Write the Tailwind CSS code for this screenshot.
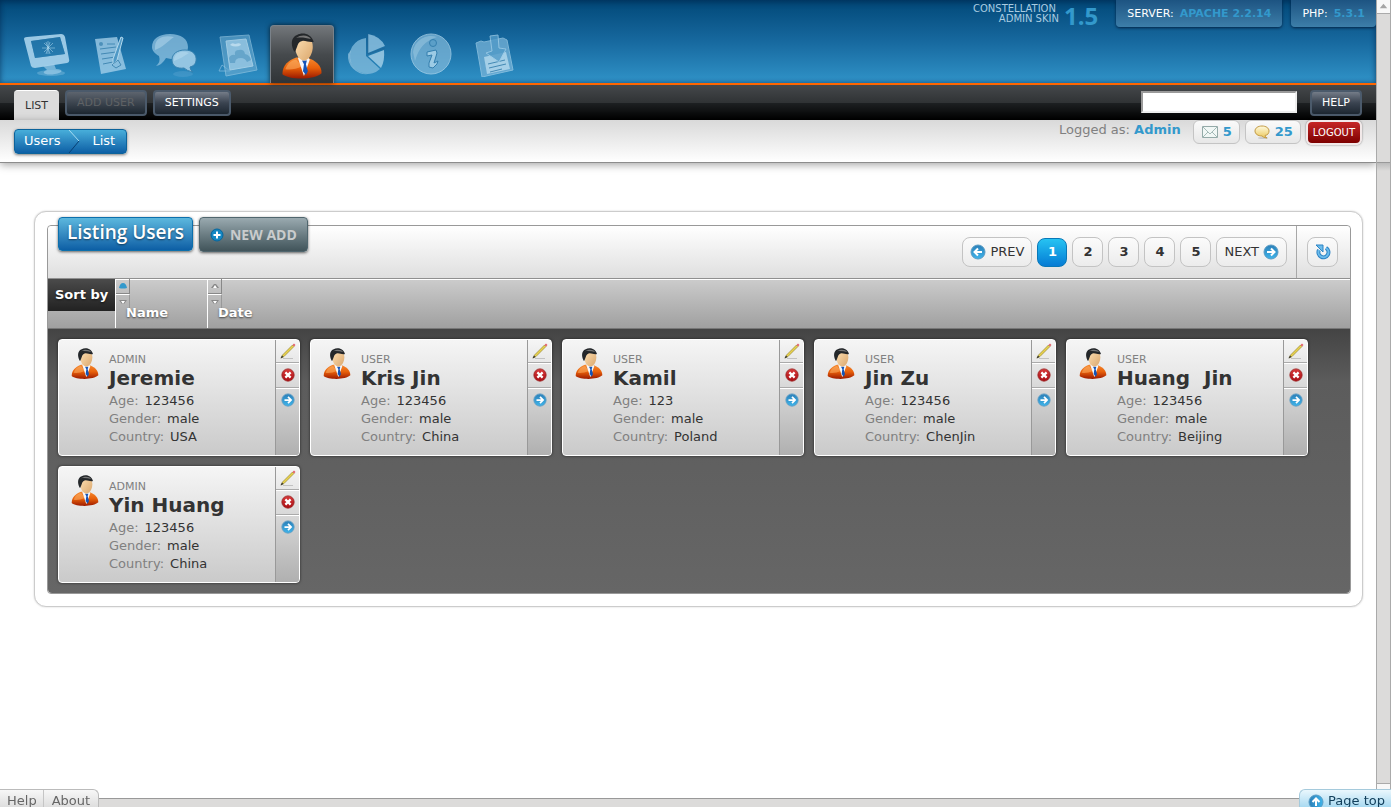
<!DOCTYPE html>
<html lang="en">
<head>
<meta charset="utf-8">
<title>Constellation Admin Skin</title>
<meta name="viewport" content="width=device-width, initial-scale=1">
<script src="https://cdn.jsdelivr.net/npm/@tailwindcss/browser@4"></script>
</head>
<body class="min-h-screen bg-white font-['DejaVu_Sans',sans-serif] text-[13px] leading-5 text-[#333333]">
<svg class="absolute size-0" aria-hidden="true">
  <defs>
    <linearGradient id="coat" x1="0" y1="0" x2="0" y2="1"><stop offset="0" stop-color="#f58a30"/><stop offset=".5" stop-color="#e8600a"/><stop offset="1" stop-color="#9c1a00"/></linearGradient>
    <linearGradient id="face" x1="0" y1="0" x2="1" y2="1"><stop offset="0" stop-color="#fde0b4"/><stop offset="1" stop-color="#dba76c"/></linearGradient>
    <linearGradient id="ball" x1="0" y1="0" x2="0" y2="1"><stop offset="0" stop-color="#2b7fb8"/><stop offset="1" stop-color="#3fb4ea"/></linearGradient>
    <linearGradient id="redball" x1="0" y1="0" x2="0" y2="1"><stop offset="0" stop-color="#d93a3a"/><stop offset="1" stop-color="#a80d14"/></linearGradient>
    <linearGradient id="gold" x1="0" y1="0" x2="0" y2="1"><stop offset="0" stop-color="#fffbe0"/><stop offset="1" stop-color="#eac65a"/></linearGradient>
  </defs>
  <symbol id="user" viewBox="0 0 40 48">
    <path d="M0 42C0 33 6 28 14 25L25 25C34 28 40 33 40 41C33 48 7 48 0 42Z" fill="url(#coat)"/>
    <path d="M3 37C5 31 9 28 14 27L20 34C14 37 8 38 3 37Z" fill="#ffc07a" opacity=".45"/>
    <path d="M16 26L22 44L28 27L25 24L17 24Z" fill="#f4f8fc"/>
    <path d="M20 28L25 28L24 32L26 39L24 43L21 39L22 32Z" fill="#1454b8"/>
    <path d="M13 14C13 7 16 4 22 4C28 4 31 8 31 14C31 21 27 28 22 28C17 28 13 21 13 14Z" fill="url(#face)"/>
    <path d="M12 19C8 12 9 4 15 2C20-1 29 0 32 9C28 10 25 8 21 8C16 9 16 12 15 14L13 19Z" fill="#24272a"/>
    <path d="M14 5C19 1 27 2 29 6C24 5 19 4 14 5Z" fill="#777"/>
  </symbol>
  <symbol id="arrow" viewBox="0 0 16 16">
    <circle cx="8" cy="8" r="7" fill="url(#ball)" stroke="#5a9cc4"/>
    <path d="M4 8H11M8 4.500L11.500 8L8 11.500" fill="none" stroke="#fff" stroke-width="2"/>
  </symbol>
  <symbol id="cross" viewBox="0 0 16 16">
    <circle cx="8" cy="8" r="7" fill="url(#redball)" stroke="#9c2020"/>
    <path d="M5 5L11 11M11 5L5 11" stroke="#fff" stroke-width="2.600"/>
  </symbol>
  <symbol id="pencil" viewBox="0 0 16 16">
    <path d="M3 15.500H13" stroke="#888" opacity=".4"/>
    <path d="M1 15L2.500 12L12.500 2L14 3.500L4 13.500Z" fill="#e8d24c" stroke="#8a7a2a" stroke-width=".6"/>
    <path d="M12.500 2L14 .5L15.500 2L14 3.500Z" fill="#e2606a"/>
    <path d="M.5 15.500L2 12.500L3.500 14Z" fill="#333"/>
  </symbol>
</svg>

<div class="flex min-h-screen">
<div class="flex min-w-0 flex-1 flex-col">
  <header>
    <div class="flex h-[83px] justify-between bg-linear-to-b from-[#024878] via-[#17699f] to-[#3093c8] shadow-[inset_0_2px_6px_rgba(0,20,50,.4),inset_0_-1px_4px_rgba(0,40,80,.3)]">
      <nav class="flex items-end pl-[14px]" aria-label="Main">
        <a href="#" aria-label="Home" class="flex h-[58px] w-16 justify-center pt-1">
          <svg class="size-12" viewBox="0 0 48 48" fill="#a9d3ec" fill-opacity=".6"><ellipse cx="29" cy="44" rx="14" ry="3" opacity=".5"/><path d="M21 37L32 35L34 40C42 40 41 44 33 45C23 47 18 43 25 41Z"/><path fill-rule="evenodd" d="M2 10Q2 8 5 8L39 5Q42 5 43 8L47 30Q48 33 45 34L13 39Q10 39 9 37ZM9 12L13 29L43 25L38 8Z" fill-opacity=".9"/><path d="M9 12L38 8L43 25L13 29Z" fill="#2e80b2" fill-opacity=".5"/><path d="M26 12V25M20 19H33M22 14L31 23M31 14L22 23M24 13L28 25M28 13L24 25" stroke="#bfe3f6" stroke-opacity=".6" stroke-width=".8"/></svg>
        </a>
        <a href="#" aria-label="Write" class="flex h-[58px] w-16 justify-center pt-1">
          <svg class="size-12" viewBox="0 0 48 48"><path d="M9 10L31 8L40 40L15 45Z" fill="#a9d3ec" opacity=".75"/><path d="M21 15H29M14 20L30 18M15 25L30 23M16 30L29 28M17 35L27 33" stroke="#4389b4"/><circle cx="15" cy="15" r="2" fill="#4d90ba"/><path d="M35 8L37 9L31 31L27 36L27 30Z" fill="#4f99c6" stroke="#b4d9ed"/><path d="M26 36L32 31L35 36L30 39Z" fill="none" stroke="#4389b4"/></svg>
        </a>
        <a href="#" aria-label="Comments" class="flex h-[58px] w-16 justify-center pt-1">
          <svg class="size-12" viewBox="0 0 48 48"><ellipse cx="33" cy="45" rx="10" ry="3" fill="#77b4da" opacity=".25"/><path d="M20 5C31 5 38 10 38 18C38 26 30 31 21 30L16 29Q12 36 6 37Q11 33 9 27C4 24 2 21 2 18C2 10 9 5 20 5Z" fill="#8fc2e0" opacity=".75"/><path d="M5 17C6 8 15 6 24 8C17 13 13 18 5 21Z" fill="#cbe7f5" opacity=".4"/><path d="M35 21C43 21 47 26 46 32C45 36 43 37 40 38Q40 41 43 43Q37 42 34 39C27 40 22 37 22 31C22 25 27 21 35 21Z" fill="#94c5e2" stroke="#3581b0"/><path d="M24 30C25 23 33 21 39 24C34 27 30 30 24 32Z" fill="#cbe7f5" opacity=".35"/></svg>
        </a>
        <a href="#" aria-label="Media" class="flex h-[58px] w-16 justify-center pt-1">
          <svg class="size-12" viewBox="0 0 48 48"><path d="M8 36L5 42L16 42Z" fill="none" stroke="#7db8dc" opacity=".8"/><path d="M6 8L35 6L43 41L12 47Z" fill="#66a9d0" opacity=".65" stroke="#9bcbe5"/><path d="M12 12L32 10L39 37L16 41Z" fill="#a5d0e9" opacity=".7" stroke="#c5e3f3"/><path d="M16 16Q18 13 21 15Q27 13 27 16Q22 19 16 16Z" fill="#cce6f4" opacity=".7"/><path d="M16 34L15 29Q17 25 21 26Q20 21 25 21Q30 20 31 25Q36 26 37 31L33 33Q31 29 27 29Q21 29 21 34Z" fill="#5c9fc6" opacity=".8"/></svg>
        </a>
        <a href="#" aria-label="Users" aria-current="page" class="flex h-[58px] w-16 justify-center rounded-t border border-b-0 border-[#7a828a] bg-linear-to-b from-[#73777b] via-[#464a4d] to-[#303437] pt-[7px] shadow-[0_0_5px_rgba(0,0,0,.7)]">
          <svg class="h-[47px] w-10"><use href="#user"/></svg>
        </a>
        <a href="#" aria-label="Statistics" class="flex h-[58px] w-16 justify-center pt-1">
          <svg class="size-12" viewBox="0 0 48 48"><path d="M24 9A18 18 0 1 0 38 40L24 27Z" fill="#86bddd" opacity=".75"/><path d="M6 25A18 18 0 0 0 26 45A18 18 0 0 1 9 21Z" fill="#bfe0f1" opacity=".5"/><path d="M26 27L42 21Q43 32 39 39Z" fill="#a8d2ea" opacity=".8"/><path d="M26 5Q38 7 43 17L26 24Z" fill="#91c4e2" opacity=".8"/><path d="M26 5V25L43 19" fill="none" stroke="#245f8b" opacity=".5"/></svg>
        </a>
        <a href="#" aria-label="Information" class="flex h-[58px] w-16 justify-center pt-1">
          <svg class="size-12" viewBox="0 0 48 48"><circle cx="25" cy="25" r="20" fill="#83bbdc" opacity=".7" stroke="#b7dbef"/><path d="M7 23A18 18 0 0 1 31 8Q14 13 9 32Z" fill="#c6e4f3" opacity=".3"/><circle cx="27" cy="14" r="3.500" fill="#5b9fc8" stroke="#347fae"/><path d="M21 23L30 21L31 24L28 34L32 32L31 35L27 39L23 38L23 34L26 26L21 27Z" fill="#9ccbe5" stroke="#347fae"/></svg>
        </a>
        <a href="#" aria-label="Backup" class="flex h-[58px] w-16 justify-center pt-1">
          <svg class="size-12" viewBox="0 0 48 48"><path d="M6 14L11 12L14 13L33 9L37 11L43 41L12 48Z" fill="#76b2d7" opacity=".75" stroke="#9dcce7"/><path d="M14 28L36 23L40 40L17 45Z" fill="#b5daee" opacity=".8"/><path d="M18 35L35 31M19 39L36 35M20 43L32 40" stroke="#4389b4"/><path d="M20 7L28 6L29 19L36 20L29 33L16 24L22 22Z" fill="#529bc8" stroke="#9dcce7" opacity=".8"/></svg>
        </a>
      </nav>
      <div class="flex items-start">
        <p class="mr-[5px] mt-1 text-right text-[10px] leading-[10px] text-[#a9cbe0]"><span class="mr-[3px]">CONSTELLATION</span><br>ADMIN SKIN</p>
        <strong class="mr-[18px] mt-[2px] font-['Open_Sans'] text-2xl font-bold leading-7 text-[#3399cc]">1.5</strong>
        <p class="mr-[9px] flex h-[27px] items-center rounded-b bg-linear-to-b from-[#1d5482] to-[#3d7ea9] px-[11px] text-[11px] text-white shadow-[0_1px_3px_rgba(0,20,50,.8)]">SERVER:<b class="ml-[6px] text-[#3399cc]">APACHE 2.2.14</b></p>
        <p class="flex h-[27px] items-center rounded-b bg-linear-to-b from-[#1d5482] to-[#3d7ea9] px-[11px] text-[11px] text-white shadow-[0_1px_3px_rgba(0,20,50,.8)]">PHP:<b class="ml-[6px] text-[#3399cc]">5.3.1</b></p>
      </div>
    </div>
    <div class="flex h-[37px] justify-between border-t-2 border-[#ff6600] bg-[linear-gradient(#45484b,#303335_50%,#1e2123_50%,#000)] px-[14px]">
      <nav class="flex items-start gap-[6px] pt-[5px] text-[11px]" aria-label="Section">
        <a href="#" class="flex h-[30px] items-center rounded-t border-t border-white bg-[#dcdcdc] px-[11px]">LIST</a>
        <button disabled class="h-[26px] rounded border-2 border-[#4b5a6b] bg-linear-to-b from-[#5d646e] to-[#1d2731] px-[10px] text-[#5f6265]">ADD USER</button>
        <a href="#" class="flex h-[26px] items-center rounded border-2 border-[#4b5a6b] bg-linear-to-b from-[#747c88] via-[#3a4350] to-[#1d2731] px-[10px] text-white">SETTINGS</a>
      </nav>
      <form class="flex items-start pt-[5px]">
        <input aria-label="Search" class="mt-px h-[22px] w-[156px] border-2 border-[#eeeeee] border-l-[#9a9a9a] border-t-[#9a9a9a] bg-white px-1">
        <button type="button" class="ml-[13px] h-[26px] rounded border-2 border-[#4b5a6b] bg-linear-to-b from-[#747c88] via-[#3a4350] to-[#1d2731] px-[10px] text-[11px] text-white">HELP</button>
      </form>
    </div>
  </header>

  <div class="flex h-[43px] justify-between border-b border-[#8c8c8c] bg-linear-to-b from-[#d9d9d9] to-white px-[14px] shadow-[0_2px_8px_rgba(0,0,0,.35)]">
    <nav class="mt-[9px] flex h-[25px] rounded border border-[#0c639b] bg-linear-to-b from-[#48aeda] to-[#0c5fa5] text-white shadow-[0_1px_3px_rgba(0,0,0,.5)]" aria-label="Breadcrumb">
      <a href="#" class="pl-[9px] leading-[22px]">Users</a>
      <svg class="ml-2 h-[23px] w-3" viewBox="0 0 12 23" fill="none"><path d="M1 0L11 11" stroke="#a7dcf2"/><path d="M11 11L1 23" stroke="#083f73"/></svg>
      <a href="#" class="pl-3 pr-[11px] leading-[22px]">List</a>
    </nav>
    <div class="flex items-start">
      <p class="mr-3 text-[#808080]">Logged as: <b class="text-[#3399cc]">Admin</b></p>
      <a href="#" class="mr-[5px] flex h-6 items-center gap-1 rounded-md border border-[#c4c4c4] bg-linear-to-b from-[#fafafa] to-[#e7e7e7] px-[7px] font-bold text-[#3399cc]"><svg class="h-4 w-[18px]" viewBox="0 0 18 16"><path d="M1.500 2.500H16.500V13.500H1.500Z" fill="#f1f7f5" stroke="#94aaa8"/><path d="M2 3L9 10L16 3M2 13L7 8M16 13L11 8" fill="none" stroke="#a4b9b7"/></svg>5</a>
      <a href="#" class="mr-[5px] flex h-6 items-center gap-1 rounded-md border border-[#c4c4c4] bg-linear-to-b from-[#fafafa] to-[#e7e7e7] px-[7px] font-bold text-[#3399cc]"><svg class="h-4 w-[18px]" viewBox="0 0 18 16"><ellipse cx="10" cy="14" rx="5" ry="1" fill="#999" opacity=".4"/><path d="M9 2C13 2 16 4 16 7C16 9 15 11 12 11.500Q12 13 14 14Q10 13.500 9 12C5 12 2 10 2 7C2 4 5 2 9 2Z" fill="url(#gold)" stroke="#c39b45"/></svg>25</a>
      <a href="#" class="flex h-[25px] items-center rounded-md border-2 border-[#f2e9e9] bg-linear-to-b from-[#c62626] to-[#7d0000] px-[5px] text-[10px] text-white shadow-[0_0_2px_rgba(0,0,0,.5)]">LOGOUT</a>
    </div>
  </div>

  <main class="pr-[13px] pt-12 pl-[34px]">
    <section class="rounded-xl border border-[#cccccc] bg-white pb-3 pl-3 pr-[11px] pt-[13px] shadow-[0_0_2px_rgba(0,0,0,.2)]">
      <div class="rounded border border-[#999999]">
        <div class="flex h-[52px] justify-between rounded-t bg-linear-to-b from-white to-[#dfdfdf]">
          <div class="-mt-[9px] ml-[10px] flex items-start gap-[6px] font-['Open_Sans']">
            <h1 class="flex h-[34px] items-center rounded border border-[#0c70ac] bg-linear-to-b from-[#5cb8de] to-[#0c5fa5] px-2 pb-1 text-[19px] font-semibold text-white shadow-[0_1px_3px_rgba(0,0,0,.6)] text-shadow-[0_1px_2px_rgba(0,0,0,.5)]">Listing Users</h1>
            <button class="flex h-[35px] items-center gap-[6px] rounded border border-[#50666e] bg-linear-to-b from-[#9aaab0] to-[#41545a] px-[10px] text-sm font-bold text-[#c9cccd] shadow-[0_1px_3px_rgba(0,0,0,.6)]"><svg class="size-[14px]" viewBox="0 0 14 14"><circle cx="7" cy="7" r="6" fill="#1487c2" stroke="#07669d"/><path d="M7 3.500V10.500M3.500 7H10.500" stroke="#fff" stroke-width="2"/></svg>NEW ADD</button>
          </div>
          <div class="flex">
            <nav class="flex items-center gap-[5px] pr-[9px] font-bold" aria-label="Pages">
              <a href="#" class="flex h-[30px] items-center gap-1 rounded-lg border border-[#c3c3c3] bg-linear-to-b from-[#fbfbfb] to-[#ececec] px-[7px] font-normal"><svg class="size-4 -scale-x-100"><use href="#arrow"/></svg>PREV</a>
              <a href="#" aria-current="page" class="flex h-[29px] w-[30px] items-center justify-center rounded-lg border border-[#0878b8] bg-linear-to-b from-[#27c3f2] to-[#087bd4] text-white">1</a>
              <a href="#" class="flex h-[30px] w-[31px] items-center justify-center rounded-lg border border-[#c3c3c3] bg-linear-to-b from-[#fbfbfb] to-[#ececec]">2</a>
              <a href="#" class="flex h-[30px] w-[31px] items-center justify-center rounded-lg border border-[#c3c3c3] bg-linear-to-b from-[#fbfbfb] to-[#ececec]">3</a>
              <a href="#" class="flex h-[30px] w-[31px] items-center justify-center rounded-lg border border-[#c3c3c3] bg-linear-to-b from-[#fbfbfb] to-[#ececec]">4</a>
              <a href="#" class="flex h-[30px] w-[31px] items-center justify-center rounded-lg border border-[#c3c3c3] bg-linear-to-b from-[#fbfbfb] to-[#ececec]">5</a>
              <a href="#" class="flex h-[30px] items-center gap-1 rounded-lg border border-[#c3c3c3] bg-linear-to-b from-[#fbfbfb] to-[#ececec] px-[7px] font-normal">NEXT<svg class="size-4"><use href="#arrow"/></svg></a>
            </nav>
            <div class="flex items-center border-l border-[#a8a8a8] pl-[10px] pr-3">
              <button aria-label="Refresh" class="flex h-[30px] w-[31px] items-center justify-center rounded-lg border border-[#c3c3c3] bg-linear-to-b from-[#fbfbfb] to-[#ececec]"><svg class="size-4" viewBox="0 0 16 16" fill="none"><path d="M11 4A5 5 0 1 1 4 6" stroke="#2d83c4" stroke-width="4"/><path d="M11 4A5 5 0 1 1 4 6" stroke="#6bbcec" stroke-width="2"/><path d="M1 1H8V8Z" fill="#6bbcec" stroke="#2d83c4"/></svg></button>
            </div>
          </div>
        </div>
        <div class="flex h-[51px] items-start border-y border-b-[#777777] border-t-[#909090] bg-linear-to-b from-[#cccccc] to-[#a0a0a0] font-bold text-white shadow-[inset_0_1px_0_white] text-shadow-[0_1px_2px_rgba(0,0,0,.6)]">
          <div class="flex h-8 w-[67px] items-center whitespace-nowrap bg-linear-to-b from-[#4b4b4b] to-[#222222] pl-[7px]">Sort by</div>
          <div class="flex h-[49px] w-[92px] border-l border-white">
            <div class="relative w-full">
              <button aria-label="Sort names ascending" class="flex h-[15px] w-[14px] items-center justify-center border-b border-r border-[#888888]"><svg class="h-2 w-2" viewBox="0 0 8 8"><path d="M0 6Q1 1 4 1Q7 1 8 6Q4 7 0 6Z" fill="#3399cc"/></svg></button>
              <button aria-label="Sort names descending" class="flex h-[15px] w-[14px] items-center justify-center border-r border-t border-t-white border-r-[#999999]"><svg class="h-2 w-2" viewBox="0 0 8 8"><path d="M0 2H8L5 6H3Z" fill="#888"/><path d="M2 3H6L4 6Z" fill="#fff"/></svg></button>
              <span class="absolute left-[10px] top-6">Name</span>
            </div>
          </div>
          <div class="flex h-[49px] flex-1 border-l border-white">
            <div class="relative w-full">
              <button aria-label="Sort dates ascending" class="flex h-[15px] w-[14px] items-center justify-center border-b border-r border-[#888888]"><svg class="h-2 w-2" viewBox="0 0 8 8"><path d="M0 6L3 2H5L8 6Z" fill="#888"/><path d="M2 6L4 3L6 6Z" fill="#fff"/></svg></button>
              <button aria-label="Sort dates descending" class="flex h-[15px] w-[14px] items-center justify-center border-r border-t border-t-white border-r-[#999999]"><svg class="h-2 w-2" viewBox="0 0 8 8"><path d="M0 2H8L5 6H3Z" fill="#888"/><path d="M2 3H6L4 6Z" fill="#fff"/></svg></button>
              <span class="absolute left-[10px] top-6">Date</span>
            </div>
          </div>
        </div>
        <ul id="users" class="flex flex-wrap gap-[10px] rounded-b bg-linear-to-b from-[#444444] via-[#5c5c5c] via-20% to-[#666666] p-[10px]"></ul>
      </div>
    </section>
  </main>
</div>
<div class="flex w-[15px] shrink-0 flex-col border-x border-[#aaaaaa] bg-[#dcdbda]" aria-hidden="true">
  <svg class="h-[14px] w-full border-b border-[#aaaaaa] bg-[#f8f8f8]" viewBox="0 0 12 14"><path d="M2 9L6 4L10 9Z" fill="#a5a5a5"/></svg>
  <div class="h-[149px] border-b border-[#999999]"></div>
  <div class="h-2 bg-linear-to-b from-[#bbbbbb] to-[#dcdbda]"></div>
  <div class="mt-auto h-6 border-t border-[#aaaaaa] bg-[#f8f8f8]"></div>
</div>
</div>

<footer class="fixed inset-x-0 bottom-0 flex h-[18px] items-end justify-between">
  <div class="absolute inset-x-0 bottom-0 h-[9px] border-t border-[#999999] bg-[#dcdbda]"></div>
  <nav class="relative flex h-[18px] rounded-tr-md border-r border-t border-[#bbbbbb] bg-linear-to-b from-[#f7f7f7] to-[#dedede] leading-[22px] text-[#666666]" aria-label="Footer">
    <a href="#" class="border-r border-[#c5c5c5] pl-[7px] pr-[6px]">Help</a>
    <a href="#" class="px-2">About</a>
  </nav>
  <a href="#" class="relative flex h-[18px] gap-1 rounded-tl-md border-l border-t border-[#a5cadc] bg-linear-to-b from-[#eaf7fd] to-[#a9daf1] pl-2 pr-[6px] leading-[22px] text-[#13405c]"><svg class="mt-1 size-4 -rotate-90"><use href="#arrow"/></svg>Page top</a>
</footer>

<template id="card">
  <li class="flex h-[117px] w-[242px] overflow-hidden rounded border border-white bg-linear-to-b from-[#f5f5f5] to-[#cacaca] shadow-[0_0_3px_rgba(0,0,0,.6)]">
    <svg class="ml-3 mt-2 h-8 w-7 shrink-0"><use href="#user"/></svg>
    <div class="ml-[10px] mt-3 flex-1 leading-[18px]">
      <p data-f="role" class="h-[15px] text-[11px] leading-4 text-[#808080]"></p>
      <h2 data-f="name" class="mb-[5px] h-5 whitespace-pre text-xl font-bold leading-[22px]"></h2>
      <dl>
        <div class="flex gap-[6px]"><dt class="text-[#808080]">Age:</dt><dd data-f="age"></dd></div>
        <div class="flex gap-[6px]"><dt class="text-[#808080]">Gender:</dt><dd>male</dd></div>
        <div class="flex gap-[6px]"><dt class="text-[#808080]">Country:</dt><dd data-f="country"></dd></div>
      </dl>
    </div>
    <div class="flex w-6 flex-col border-l border-[#999999] bg-linear-to-b from-[#f5f5f5] to-[#b0b0b0]">
      <button aria-label="Edit" class="flex h-[23px] items-center justify-center border-b border-[#aaaaaa]"><svg class="size-4"><use href="#pencil"/></svg></button>
      <button aria-label="Delete" class="flex h-[25px] items-center justify-center border-b border-t border-b-[#aaaaaa] border-t-white pb-px"><svg class="size-[14px]"><use href="#cross"/></svg></button>
      <button aria-label="Open" class="flex h-[25px] items-center justify-center border-t border-white pb-[2px]"><svg class="size-[14px]"><use href="#arrow"/></svg></button>
    </div>
  </li>
</template>
<script>
const people = [["ADMIN","Jeremie","123456","USA"],["USER","Kris Jin","123456","China"],["USER","Kamil","123","Poland"],["USER","Jin Zu","123456","ChenJin"],["USER","Huang  Jin","123456","Beijing"],["ADMIN","Yin Huang","123456","China"]];
for (const p of people) {
  const card = document.getElementById("card").content.cloneNode(true);
  ["role","name","age","country"].forEach((f, i) => card.querySelector(`[data-f=${f}]`).textContent = p[i]);
  document.getElementById("users").append(card);
}
</script>
</body>
</html>
